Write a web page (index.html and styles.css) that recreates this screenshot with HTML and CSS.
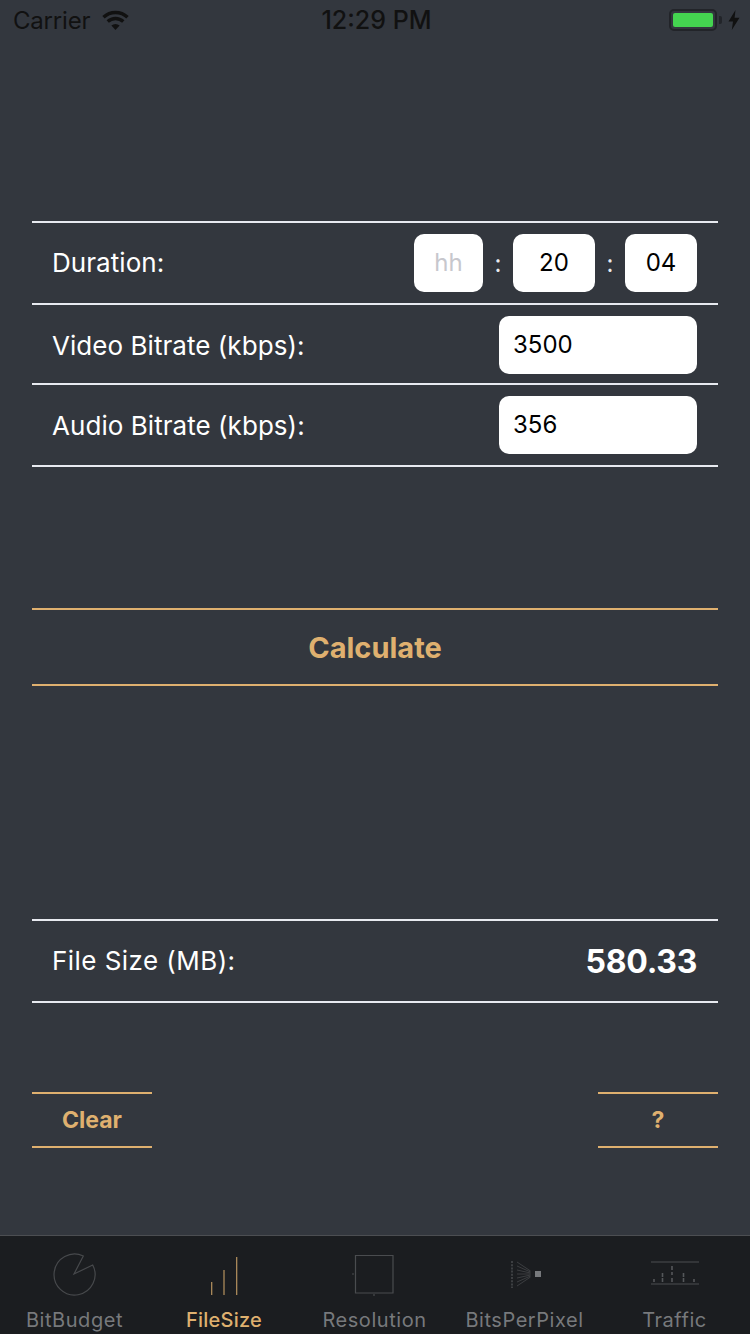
FILE: index.html
```html
<!DOCTYPE html>
<html lang="en">
<head>
  <meta charset="UTF-8">
  <title>FileSize</title>
  <link rel="stylesheet" href="styles.css">
</head>
<body>
  <div class="phone">
    <div class="status-bar">
      <div class="status-left">
        <span class="carrier">Carrier</span>
        <svg class="wifi" width="27" height="20" viewBox="0 0 27 20">
          <path d="M13.5 20 L9.4 15.6 A6 6 0 0 1 17.6 15.6 Z" fill="#111"/>
          <path d="M5.7 11.6 A11.5 11.5 0 0 1 21.3 11.6" fill="none" stroke="#111" stroke-width="3.4"/>
          <path d="M1.5 7.3 A17.5 17.5 0 0 1 25.5 7.3" fill="none" stroke="#111" stroke-width="3.4"/>
        </svg>
      </div>
      <div class="clock">12:29 PM</div>
      <div class="status-right">
        <div class="battery"><div class="battery-level"></div></div>
        <div class="battery-tip"></div>
        <svg class="bolt" width="12" height="20" viewBox="0 0 12 20">
          <path d="M7.5 0 L0.5 11.5 H5 L3.8 20 L11.5 7.8 H6.6 Z" fill="#111"/>
        </svg>
      </div>
    </div>

    <div class="form-box">
      <div class="row">
        <span class="label">Duration:</span>
        <div class="time-inputs">
          <div class="input input-hh placeholder">hh</div>
          <span class="colon">:</span>
          <div class="input input-mm">20</div>
          <span class="colon">:</span>
          <div class="input input-ss">04</div>
        </div>
      </div>
      <div class="row row-short">
        <span class="label label-bitrate">Video Bitrate (kbps):</span>
        <div class="input input-wide">3500</div>
      </div>
      <div class="row">
        <span class="label label-bitrate">Audio Bitrate (kbps):</span>
        <div class="input input-wide">356</div>
      </div>
    </div>

    <div class="calculate">Calculate</div>

    <div class="result">
      <span class="label label-result">File Size (MB):</span>
      <span class="result-value">580.33</span>
    </div>

    <div class="actions">
      <div class="small-btn">Clear</div>
      <div class="small-btn">?</div>
    </div>

    <div class="tab-bar">
      <div class="tab">
        <svg class="tab-icon" width="44" height="44" viewBox="0 0 44 44">
          <path d="M30.3 3 A20.5 20.5 0 1 0 39.7 12 L21 21 Z" fill="none" stroke="#47494c" stroke-width="1.2"/>
        </svg>
        <span class="tab-label">BitBudget</span>
      </div>
      <div class="tab active">
        <svg class="tab-icon" width="44" height="44" viewBox="0 0 44 44">
          <path d="M8.7 29 V42 M21 17 V42 M33.7 4 V42" fill="none" stroke="#b8935f" stroke-width="1.2"/>
        </svg>
        <span class="tab-label">FileSize</span>
      </div>
      <div class="tab">
        <svg class="tab-icon" width="44" height="44" viewBox="0 0 44 44">
          <path d="M2.5 2.5 H40 V40 H2.5 Z" fill="none" stroke="#4a4c4f" stroke-width="1.2"/>
          <path d="M-1 21 H1 M21 41 V43" stroke="#4a4c4f" stroke-width="1.2"/>
        </svg>
        <span class="tab-label">Resolution</span>
      </div>
      <div class="tab">
        <svg class="tab-icon" width="44" height="44" viewBox="0 0 44 44">
          <path d="M9 8 V35" fill="none" stroke="#55575a" stroke-width="1.2" stroke-dasharray="2 1.2"/>
          <path d="M14 9 L27.5 18 M14 13 L27.5 19 M14 17 L27.5 20 M14 21 H27.5 M14 25 L27.5 22 M14 29 L27.5 23 M14 33 L27.5 24" fill="none" stroke="#4a4c4f" stroke-width="0.7"/>
          <rect x="32" y="18" width="6" height="6" fill="#77797c"/>
        </svg>
        <span class="tab-label">BitsPerPixel</span>
      </div>
      <div class="tab">
        <svg class="tab-icon" width="48" height="44" viewBox="0 0 48 44">
          <path d="M0 9 H48 M0 31 H48" fill="none" stroke="#4c4e51" stroke-width="1.2"/>
          <path d="M3 26 V29 M11.5 20 V24 M11.5 25 V29 M21 13 V17 M21 19 V22 M21 25 V29 M32.5 20 V24 M32.5 25 V29 M43 26 V29" fill="none" stroke="#55575a" stroke-width="1.6"/>
        </svg>
        <span class="tab-label">Traffic</span>
      </div>
    </div>
  </div>
</body>
</html>
```

FILE: styles.css
```css
* {
  box-sizing: border-box;
}
body {
  margin: 0;
  background: #33373e;
  font-family: Inter, Roboto, sans-serif;
}
.phone {
  width: 750px;
  height: 1334px;
  display: flex;
  flex-direction: column;
  background: #33373e;
  overflow: hidden;
}

/* status bar */
.status-bar {
  height: 40px;
  padding: 0 10px 0 13px;
  display: flex;
  align-items: center;
  justify-content: space-between;
  color: #111;
}
.status-left {
  width: 240px;
  display: flex;
  align-items: center;
  gap: 12px;
}
.carrier {
  font-size: 24px;
  letter-spacing: -0.2px;
}
.clock {
  font-size: 25px;
  font-weight: 500;
}
.status-right {
  width: 240px;
  display: flex;
  align-items: center;
  justify-content: flex-end;
}
.battery {
  width: 48px;
  height: 22px;
  padding: 2px;
  border: 2px solid #222429;
  border-radius: 5px;
}
.battery-level {
  height: 100%;
  background: #44d450;
  border-radius: 2px;
}
.battery-tip {
  width: 3px;
  height: 8px;
  margin: 0 6px 0 2px;
  background: #222429;
  border-radius: 0 2px 2px 0;
}

/* form */
.form-box {
  margin: 181px 32px 0;
  border-bottom: 2px solid #e8eaf0;
}
.row {
  height: 82px;
  padding: 11px 21px 0 20px;
  display: flex;
  justify-content: space-between;
  border-top: 2px solid #e8eaf0;
}
.row-short {
  height: 80px;
}
.label {
  line-height: 58px;
  font-size: 26px;
  color: #fff;
  letter-spacing: 0.05px;
}
.label-bitrate {
  padding-top: 1px;
}
.label-result {
  letter-spacing: 0.45px;
}
.time-inputs {
  display: flex;
  height: 58px;
  align-items: center;
}
.colon {
  width: 30px;
  text-align: center;
  font-size: 24px;
  color: #e8eaf0;
}
.input {
  height: 58px;
  padding-bottom: 2px;
  background: #fff;
  border-radius: 10px;
  display: flex;
  align-items: center;
  justify-content: center;
  font-size: 24px;
  color: #000;
}
.input-hh {
  width: 69px;
}
.input-mm {
  width: 82px;
}
.input-ss {
  width: 72px;
}
.input-wide {
  width: 198px;
  padding-left: 14px;
  justify-content: flex-start;
}
.placeholder {
  color: #c7c7cd;
}

/* calculate */
.calculate {
  height: 78px;
  margin: 141px 32px 0;
  display: flex;
  align-items: center;
  justify-content: center;
  border-top: 2px solid #dfb06f;
  border-bottom: 2px solid #dfb06f;
  color: #dfb06f;
  font-size: 29px;
  font-weight: 700;
}

/* result */
.result {
  height: 84px;
  margin: 233px 32px 0;
  padding: 0 21px 0 20px;
  display: flex;
  align-items: center;
  justify-content: space-between;
  border-top: 2px solid #e8eaf0;
  border-bottom: 2px solid #e8eaf0;
}
.result-value {
  font-size: 32px;
  font-weight: 700;
  color: #fff;
  letter-spacing: -0.3px;
}

/* clear and help */
.actions {
  margin: 89px 32px 0;
  display: flex;
  justify-content: space-between;
}
.small-btn {
  width: 120px;
  height: 56px;
  display: flex;
  align-items: center;
  justify-content: center;
  border-top: 2px solid #dfb06f;
  border-bottom: 2px solid #dfb06f;
  color: #dfb06f;
  font-size: 23px;
  font-weight: 700;
}

/* tab bar */
.tab-bar {
  margin-top: auto;
  height: 99px;
  display: flex;
  background: #1b1d20;
  border-top: 1px solid #4c4e52;
}
.tab {
  width: 150px;
  display: flex;
  flex-direction: column;
  align-items: center;
  color: #77797c;
}
.tab-icon {
  margin-top: 17px;
  height: 44px;
  overflow: visible;
}
.tab-label {
  margin-top: 11px;
  margin-right: 1px;
  font-size: 20px;
  letter-spacing: 0.55px;
}
.tab.active {
  color: #dfb06f;
}
.tab.active .tab-label {
  margin-right: 2px;
  font-weight: 500;
  letter-spacing: 0.25px;
}
```
